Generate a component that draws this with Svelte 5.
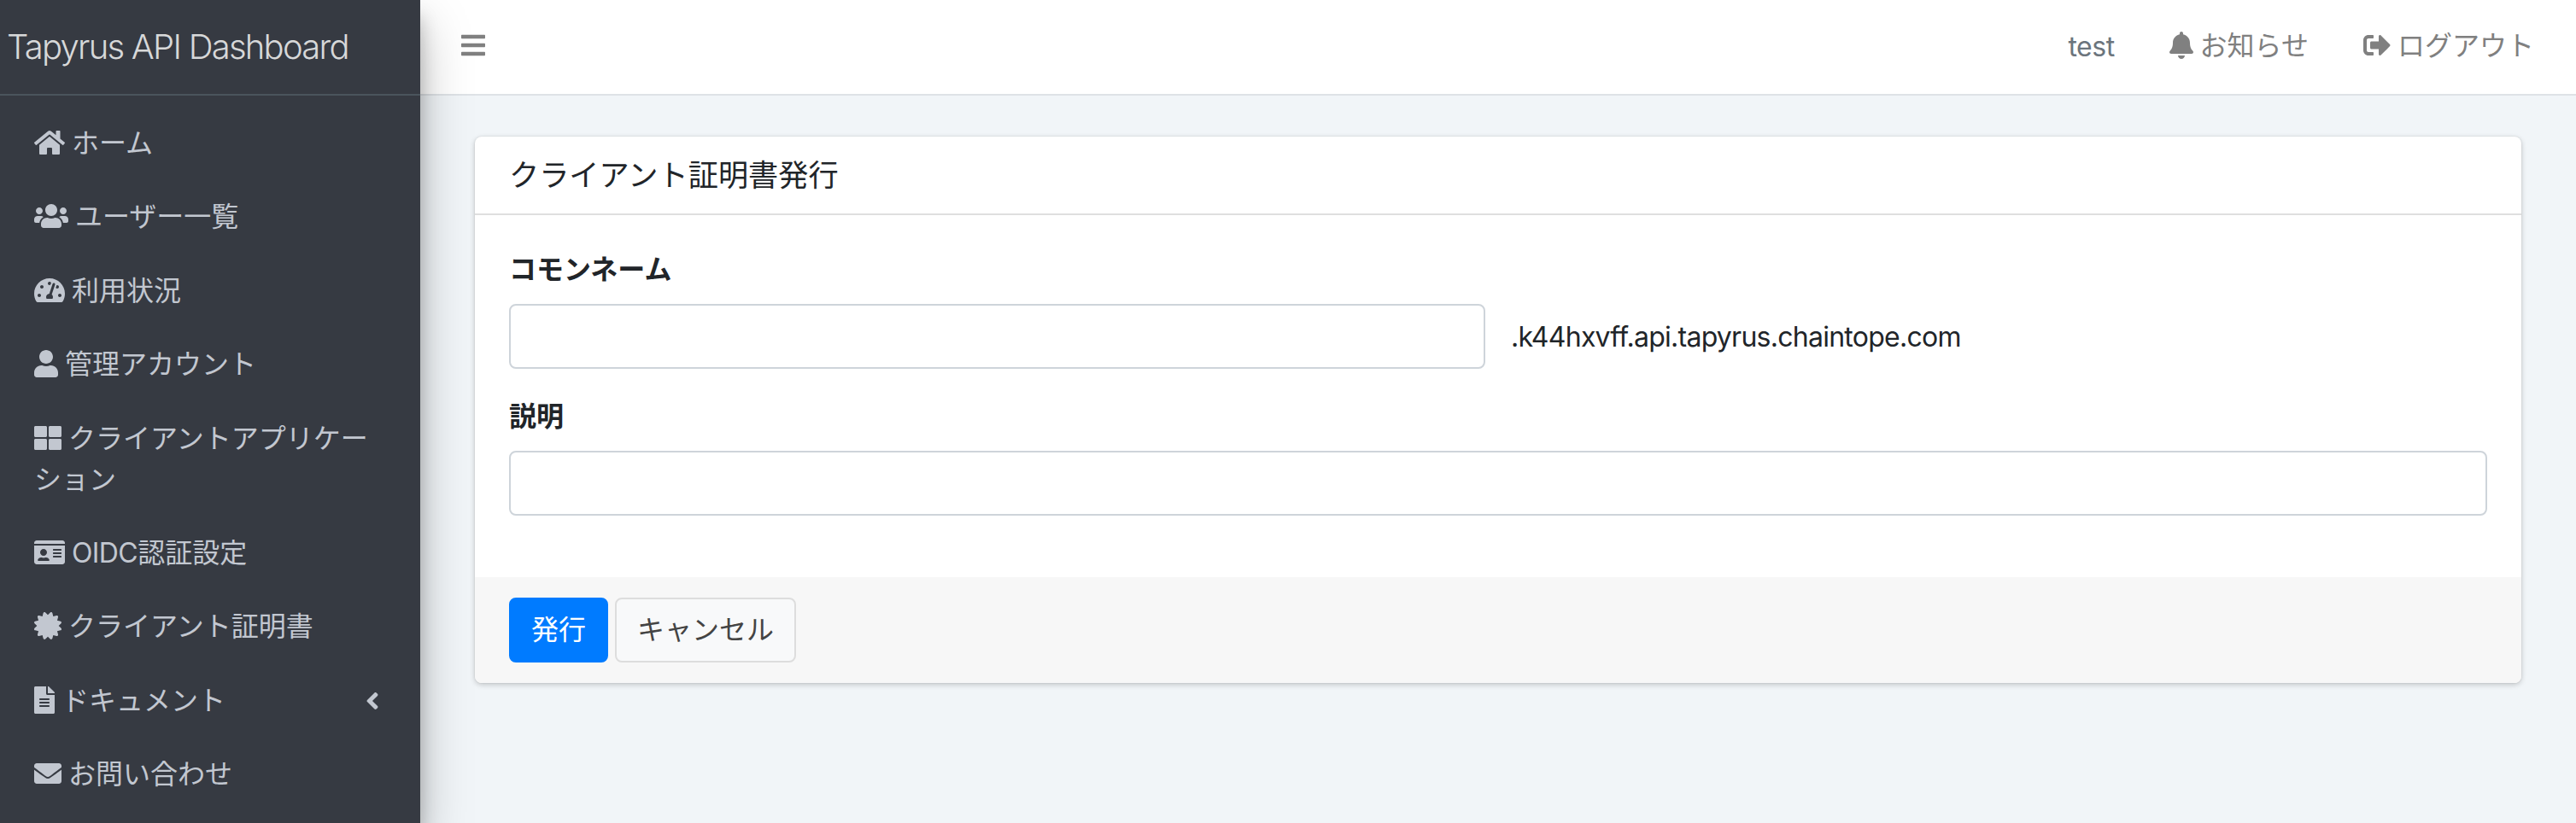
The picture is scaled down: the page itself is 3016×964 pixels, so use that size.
<script>
const icons = {
    bars: { w: 448, d: "M16 132h416c8.837 0 16-7.163 16-16V76c0-8.837-7.163-16-16-16H16C7.163 60 0 67.163 0 76v40c0 8.837 7.163 16 16 16zm0 160h416c8.837 0 16-7.163 16-16v-40c0-8.837-7.163-16-16-16H16c-8.837 0-16 7.163-16 16v40c0 8.837 7.163 16 16 16zm0 160h416c8.837 0 16-7.163 16-16v-40c0-8.837-7.163-16-16-16H16c-8.837 0-16 7.163-16 16v40c0 8.837 7.163 16 16 16z" },
    home: { w: 576, d: "M280.37 148.26L96 300.11V464a16 16 0 0 0 16 16l112.06-.29a16 16 0 0 0 15.92-16V368a16 16 0 0 1 16-16h64a16 16 0 0 1 16 16v95.64a16 16 0 0 0 16 16.05L464 480a16 16 0 0 0 16-16V300L295.67 148.26a12.19 12.19 0 0 0-15.3 0zM571.6 251.47L488 182.56V44.05a12 12 0 0 0-12-12h-56a12 12 0 0 0-12 12v72.61L318.47 43a48 48 0 0 0-61 0L4.34 251.47a12 12 0 0 0-1.6 16.9l25.5 31A12 12 0 0 0 45.15 301l235.22-193.74a12.19 12.19 0 0 1 15.3 0L530.9 301a12 12 0 0 0 16.9-1.6l25.5-31a12 12 0 0 0-1.7-16.93z" },
    users: { w: 640, d: "M96 224c35.3 0 64-28.7 64-64s-28.7-64-64-64-64 28.7-64 64 28.7 64 64 64zm448 0c35.3 0 64-28.7 64-64s-28.7-64-64-64-64 28.7-64 64 28.7 64 64 64zm32 32h-64c-17.6 0-33.5 7.1-45.1 18.6 40.3 22.1 68.9 62 75.1 109.4h66c17.7 0 32-14.3 32-32v-32c0-35.3-28.7-64-64-64zm-256 0c61.9 0 112-50.1 112-112S381.9 32 320 32 208 82.1 208 144s50.1 112 112 112zm76.8 32h-8.3c-20.8 10-43.9 16-68.5 16s-47.6-6-68.5-16h-8.3C179.6 288 128 339.6 128 403.2V432c0 26.5 21.5 48 48 48h288c26.5 0 48-21.5 48-48v-28.8c0-63.6-51.6-115.2-115.2-115.2zm-223.7-13.4C161.5 263.1 145.6 256 128 256H64c-35.3 0-64 28.7-64 64v32c0 17.7 14.3 32 32 32h65.9c6.3-47.4 34.9-87.3 75.2-109.4z" },
    tachometer: { w: 576, d: "M288 32C128.94 32 0 160.94 0 320c0 52.8 14.25 102.26 39.06 144.8 5.61 9.62 16.3 15.2 27.44 15.2h443c11.14 0 21.83-5.58 27.44-15.2C561.75 422.26 576 372.8 576 320c0-159.06-128.94-288-288-288zm0 64c14.71 0 26.58 10.13 30.32 23.65-1.11 2.26-2.64 4.23-3.45 6.67l-9.22 27.67c-5.13 3.49-10.97 6.01-17.64 6.01-17.67 0-32-14.33-32-32S270.33 96 288 96zM96 384c-17.67 0-32-14.33-32-32s14.33-32 32-32 32 14.33 32 32-14.33 32-32 32zm48-160c-17.67 0-32-14.33-32-32s14.33-32 32-32 32 14.33 32 32-14.33 32-32 32zm246.77-72.41l-61.33 184C343.13 347.33 352 364.54 352 384c0 11.72-3.38 22.55-8.88 32H232.88c-5.5-9.45-8.88-20.28-8.88-32 0-33.94 26.5-61.43 59.9-63.59l61.34-184.01c4.17-12.56 17.73-19.45 30.36-15.17 12.57 4.19 19.35 17.79 15.17 30.36zm14.66 57.2l15.52-46.55c3.47-1.29 7.13-2.23 11.05-2.23 17.67 0 32 14.33 32 32s-14.33 32-32 32c-11.38-.01-20.89-6.28-26.57-15.22zM480 384c-17.67 0-32-14.33-32-32s14.33-32 32-32 32 14.33 32 32-14.33 32-32 32z" },
    user: { w: 448, d: "M224 256c70.7 0 128-57.3 128-128S294.7 0 224 0 96 57.3 96 128s57.3 128 128 128zm89.6 32h-16.7c-22.2 10.2-46.9 16-72.9 16s-50.6-5.8-72.9-16h-16.7C60.2 288 0 348.2 0 422.4V464c0 26.5 21.5 48 48 48h352c26.5 0 48-21.5 48-48v-41.6c0-74.2-60.2-134.4-134.4-134.4z" },
    thLarge: { w: 512, d: "M296 32h192c13.255 0 24 10.745 24 24v160c0 13.255-10.745 24-24 24H296c-13.255 0-24-10.745-24-24V56c0-13.255 10.745-24 24-24zm-80 0H24C10.745 32 0 42.745 0 56v160c0 13.255 10.745 24 24 24h192c13.255 0 24-10.745 24-24V56c0-13.255-10.745-24-24-24zM0 296v160c0 13.255 10.745 24 24 24h192c13.255 0 24-10.745 24-24V296c0-13.255-10.745-24-24-24H24c-13.255 0-24 10.745-24 24zm296 184h192c13.255 0 24-10.745 24-24V296c0-13.255-10.745-24-24-24H296c-13.255 0-24 10.745-24 24v160c0 13.255 10.745 24 24 24z" },
    idCard: { w: 576, d: "M528 32H48C21.5 32 0 53.5 0 80v16h576V80c0-26.5-21.5-48-48-48zM0 432c0 26.5 21.5 48 48 48h480c26.5 0 48-21.5 48-48V128H0v304zm352-232c0-4.4 3.6-8 8-8h144c4.4 0 8 3.6 8 8v16c0 4.4-3.6 8-8 8H360c-4.4 0-8-3.6-8-8v-16zm0 64c0-4.4 3.6-8 8-8h144c4.4 0 8 3.6 8 8v16c0 4.4-3.6 8-8 8H360c-4.4 0-8-3.6-8-8v-16zm0 64c0-4.4 3.6-8 8-8h144c4.4 0 8 3.6 8 8v16c0 4.4-3.6 8-8 8H360c-4.4 0-8-3.6-8-8v-16zM176 192c35.3 0 64 28.7 64 64s-28.7 64-64 64-64-28.7-64-64 28.7-64 64-64zM67.1 396.2C75.5 370.5 99.6 352 128 352h8.2c12.3 5.1 25.7 8 39.8 8s27.6-2.9 39.8-8h8.2c28.4 0 52.5 18.5 60.9 44.2 3.2 9.9-5.2 19.8-15.6 19.8H82.7c-10.4 0-18.8-10-15.6-19.8z" },
    certificate: { w: 512, d: "M458.622 255.92l45.985-45.005c13.708-12.977 7.316-36.039-10.664-40.339l-62.65-15.99 17.661-62.015c4.991-17.838-11.829-34.663-29.661-29.671l-61.994 17.667-15.984-62.671C337.085.197 313.765-6.276 300.99 7.228L256 53.57 211.011 7.229c-12.63-13.351-36.047-7.234-40.325 10.668l-15.984 62.671-61.995-17.667C74.87 57.907 58.056 74.738 63.046 92.572l17.661 62.015-62.65 15.99C.069 174.878-6.31 197.944 7.392 210.915l45.985 45.005-45.985 45.004c-13.708 12.977-7.316 36.039 10.664 40.339l62.65 15.99-17.661 62.015c-4.991 17.838 11.829 34.663 29.661 29.671l61.994-17.667 15.984 62.671c4.439 18.575 27.696 24.018 40.325 10.668L256 458.61l44.989 46.001c12.5 13.488 35.987 7.486 40.325-10.668l15.984-62.671 61.994 17.667c17.836 4.994 34.651-11.837 29.661-29.671l-17.661-62.015 62.65-15.99c17.987-4.302 24.366-27.367 10.664-40.339l-45.984-45.004z" },
    fileAlt: { w: 384, d: "M224 136V0H24C10.7 0 0 10.7 0 24v464c0 13.3 10.7 24 24 24h336c13.3 0 24-10.7 24-24V160H248c-13.2 0-24-10.8-24-24zm64 236c0 6.6-5.4 12-12 12H108c-6.6 0-12-5.4-12-12v-8c0-6.6 5.4-12 12-12h168c6.6 0 12 5.4 12 12v8zm0-64c0 6.6-5.4 12-12 12H108c-6.6 0-12-5.4-12-12v-8c0-6.6 5.4-12 12-12h168c6.6 0 12 5.4 12 12v8zm0-72v8c0 6.6-5.4 12-12 12H108c-6.6 0-12-5.4-12-12v-8c0-6.6 5.4-12 12-12h168c6.6 0 12 5.4 12 12zm96-114.1v6.1H256V0h6.1c6.4 0 12.5 2.5 17 7l97.9 98c4.5 4.5 7 10.6 7 16.9z" },
    envelope: { w: 512, d: "M502.3 190.8c3.9-3.1 9.7-.2 9.7 4.7V400c0 26.5-21.5 48-48 48H48c-26.5 0-48-21.5-48-48V195.6c0-5 5.7-7.8 9.7-4.7 22.4 17.4 52.1 39.5 154.1 113.6 21.1 15.4 56.7 47.8 92.2 47.6 35.7.3 72-32.8 92.3-47.6 102-74.1 131.6-96.3 154-113.7zM256 320c23.2.4 56.6-29.2 73.4-41.4 132.7-96.3 142.8-104.7 173.4-128.7 5.8-4.5 9.2-11.5 9.2-18.9v-19c0-26.5-21.5-48-48-48H48c-26.5 0-48 21.5-48 48v19c0 7.4 3.4 14.3 9.2 18.9 30.6 23.9 40.7 32.4 173.4 128.7 16.8 12.2 50.2 41.8 73.4 41.4z" },
    bell: { w: 448, d: "M224 512c35.32 0 63.97-28.65 63.97-64H160.03c0 35.35 28.65 64 63.97 64zm215.39-149.71c-19.32-20.76-55.47-51.99-55.47-154.29 0-77.7-54.48-139.9-127.94-155.16V32c0-17.67-14.32-32-31.98-32s-31.98 14.33-31.98 32v20.84C118.56 68.1 64.08 130.3 64.08 208c0 102.3-36.15 133.53-55.47 154.29-6 6.45-8.66 14.16-8.61 21.71.11 16.4 12.98 32 32.1 32h383.8c19.12 0 32-15.6 32.1-32 .05-7.55-2.61-15.27-8.61-21.71z" },
    signOut: { w: 512, d: "M497 273L329 441c-15 15-41 4.5-41-17v-96H152c-13.3 0-24-10.7-24-24v-96c0-13.3 10.7-24 24-24h136V88c0-21.4 25.9-32 41-17l168 168c9.3 9.4 9.3 24.6 0 34zM192 436v-40c0-6.6-5.4-12-12-12H96c-17.7 0-32-14.3-32-32V160c0-17.7 14.3-32 32-32h84c6.6 0 12-5.4 12-12V76c0-6.6-5.4-12-12-12H96c-53 0-96 43-96 96v192c0 53 43 96 96 96h84c6.6 0 12-5.4 12-12z" },
    angleLeft: { w: 256, d: "M31.7 239l136-136c9.4-9.4 24.6-9.4 33.9 0l22.6 22.6c9.4 9.4 9.4 24.6 0 33.9L127.9 256l96.4 96.4c9.4 9.4 9.4 24.6 0 33.9L201.7 409c-9.4 9.4-24.6 9.4-33.9 0l-136-136c-9.5-9.4-9.5-24.6-.1-34z" },
};

const menu = [
    { icon: "home", label: "ホーム" },
    { icon: "users", label: "ユーザー一覧" },
    { icon: "tachometer", label: "利用状況" },
    { icon: "user", label: "管理アカウント" },
    { icon: "thLarge", label: "クライアントアプリケーション" },
    { icon: "idCard", latin: "OIDC", label: "認証設定" },
    { icon: "certificate", label: "クライアント証明書" },
    { icon: "fileAlt", label: "ドキュメント", tree: true },
    { icon: "envelope", label: "お問い合わせ" },
];

let commonName = $state("");
let description = $state("");
const domain = ".k44hxvff.api.tapyrus.chaintope.com";
</script>

{#snippet icon(name)}
    <svg class="icon" width={icons[name].w / 16} height="32" viewBox="0 0 {icons[name].w} 512" aria-hidden="true"><path d={icons[name].d} /></svg>
{/snippet}

<div class="wrapper">
    <aside class="sidebar">
        <div class="brand"><span class="brand-text">Tapyrus API Dashboard</span></div>
        <nav class="menu">
            {#each menu as item}
                <div class="menu-link">
                    <span class="menu-label">{@render icon(item.icon)}{" "}{#if item.latin}<span class="latin">{item.latin}</span>{/if}{item.label}</span>
                    {#if item.tree}{@render icon("angleLeft")}{/if}
                </div>
            {/each}
        </nav>
    </aside>

    <div class="page">
        <header class="navbar">
            <span class="nav-item">{@render icon("bars")}</span>
            <div class="nav-right">
                <span class="nav-item user-name">test</span>
                <span class="nav-item">{@render icon("bell")}{" "}お知らせ</span>
                <span class="nav-item">{@render icon("signOut")}{" "}ログアウト</span>
            </div>
        </header>

        <main class="content">
            <form class="card">
                <div class="card-header"><h3>クライアント証明書発行</h3></div>
                <div class="card-body">
                    <div class="form-group">
                        <label for="common-name">コモンネーム</label>
                        <div class="row">
                            <input id="common-name" type="text" bind:value={commonName} />
                            <span class="domain">{domain}</span>
                        </div>
                    </div>
                    <div class="form-group">
                        <label for="description">説明</label>
                        <input id="description" type="text" bind:value={description} />
                    </div>
                </div>
                <div class="card-footer">
                    <button type="button" class="btn btn-primary">発行</button>
                    <button type="button" class="btn btn-default">キャンセル</button>
                </div>
            </form>
        </main>
    </div>
</div>

<style>
    :global(body) {
        margin: 0;
    }

    .wrapper {
        display: flex;
        height: 964px;
        overflow: hidden;
        box-sizing: border-box;
        font-family: Inter, "Noto Sans CJK JP", sans-serif;
        font-size: 32px;
        line-height: 48px;
        color: #212529;
        background: #f1f5f8;
    }

    .wrapper * {
        box-sizing: border-box;
    }

    .icon {
        fill: currentColor;
        vertical-align: -4px;
    }

    .sidebar {
        position: relative;
        z-index: 1;
        flex: 0 0 492px;
        background: #363a42;
        color: #c2c7d0;
        box-shadow: 0 28px 56px rgba(0, 0, 0, 0.25), 0 20px 20px rgba(0, 0, 0, 0.22);
    }

    .brand {
        height: 112px;
        padding: 25px 8px 23px;
        border-bottom: 2px solid #4b545c;
        font-size: 40px;
        line-height: 60px;
        font-weight: 300;
        white-space: nowrap;
        color: #d7d8d9;
    }

    .brand-text {
        letter-spacing: -1.75px;
    }

    .menu {
        display: flex;
        flex-direction: column;
        gap: 6.4px;
        padding: 16px 16px 0 8px;
    }

    .menu-link {
        display: flex;
        align-items: center;
        padding: 16px 32px;
    }

    .menu-label {
        flex: 1;
        word-spacing: -1px;
    }

    .latin {
        letter-spacing: -0.6px;
    }

    .page {
        flex: 1;
        min-width: 0;
    }

    .navbar {
        display: flex;
        align-items: center;
        justify-content: space-between;
        height: 112px;
        padding: 0 17px 2px 16px;
        border-bottom: 2px solid #dee2e6;
        background: #fff;
        color: #808080;
    }

    .nav-right {
        display: flex;
    }

    .nav-item {
        padding: 0 32px;
        word-spacing: -1px;
    }

    .user-name {
        padding-top: 1px;
        color: #6c757d;
        letter-spacing: -0.5px;
    }

    .content {
        padding: 48px 64px;
    }

    .card {
        border-radius: 8px;
        background: #fff;
        overflow: hidden;
        box-shadow: 0 0 2px rgba(0, 0, 0, 0.125), 0 2px 6px rgba(0, 0, 0, 0.2);
    }

    .card-header {
        padding: 24px 40px;
        border-bottom: 2px solid rgba(0, 0, 0, 0.125);
    }

    h3 {
        margin: 0;
        font-size: 35.2px;
        line-height: 42px;
        font-weight: 400;
    }

    .card-body {
        padding: 40px;
    }

    .form-group {
        margin-bottom: 32px;
    }

    label {
        display: block;
        margin-bottom: 16px;
        font-weight: 700;
    }

    .row {
        display: grid;
        grid-template-columns: 1fr 1fr;
        gap: 30px;
        align-items: center;
    }

    input {
        display: block;
        width: 100%;
        height: 76px;
        padding: 12px 24px;
        border: 2px solid #ced4da;
        border-radius: 8px;
        background: #fff;
        font: inherit;
        outline: none;
    }

    .domain {
        padding-top: 2px;
        letter-spacing: -0.74px;
    }

    .card-footer {
        display: flex;
        gap: 8px;
        padding: 24px 40px;
        background: #f7f7f7;
    }

    .btn {
        height: 76px;
        padding: 0 24px;
        border: 2px solid transparent;
        border-radius: 8px;
        font: inherit;
    }

    .btn-primary {
        background: #007bff;
        border-color: #007bff;
        color: #fff;
    }

    .btn-default {
        background: #f8f9fa;
        border-color: #ddd;
        color: #444;
    }
</style>
